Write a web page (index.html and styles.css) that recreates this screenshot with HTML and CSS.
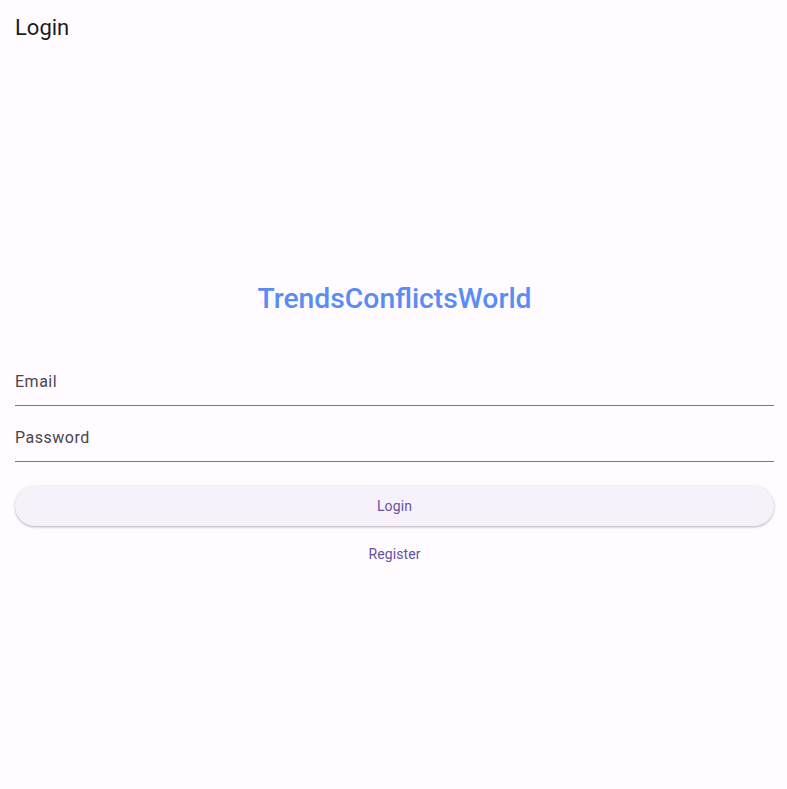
FILE: index.html
```html
<!DOCTYPE html>
<html lang="en">
<head>
<meta charset="utf-8">
<title>Login</title>
<link rel="stylesheet" href="styles.css">
</head>
<body>
<div class="app">
  <header class="appbar"><h1 class="appbar-title">Login</h1></header>
  <main class="body">
    <div class="form">
      <div class="logo">TrendsConflictsWorld</div>
      <label class="field"><span class="field-label">Email</span></label>
      <label class="field"><span class="field-label">Password</span></label>
      <button class="btn btn-elevated" type="button">Login</button>
      <button class="btn btn-text" type="button">Register</button>
    </div>
  </main>
</div>
</body>
</html>
```

FILE: styles.css
```css
* { box-sizing: border-box; }
html, body { margin: 0; padding: 0; height: 100%; }
body {
  background: #fffbfe;
  font-family: Roboto, "Noto Sans", "Liberation Sans", sans-serif;
  color: #1c1b1f;
}
.app {
  height: 100%;
  display: flex;
  flex-direction: column;
}
.appbar {
  height: 56px;
  flex: none;
  display: flex;
  align-items: center;
  padding: 0 16px 0 15px;
}
.appbar-title {
  margin: 0;
  font-size: 22px;
  font-weight: 400;
  line-height: 28px;
  color: #1c1b1f;
}
.body {
  flex: 1;
  display: flex;
  flex-direction: column;
  justify-content: center;
  padding: 0 13px 0 15px;
}
.form {
  display: flex;
  flex-direction: column;
}
.logo {
  text-align: center;
  font-size: 28.3px;
  font-weight: 500;
  line-height: 32px;
  color: #5a8cf5;
  margin: 12px 0 35px;
}
.field {
  height: 56px;
  display: flex;
  align-items: center;
  padding-top: 8px;
  border-bottom: 1px solid #79747e;
}
.field-label {
  font-size: 16px;
  letter-spacing: 0.5px;
  color: #49454f;
}
.btn {
  height: 40px;
  border: none;
  border-radius: 20px;
  font-family: inherit;
  font-size: 14px;
  font-weight: 400;
  letter-spacing: 0.1px;
  color: #6750a4;
  background: transparent;
  padding: 0;
}
.btn-elevated {
  margin-top: 24px;
  background: #f7f2fa;
  box-shadow: 0 1px 2px rgba(0,0,0,0.22), 0 1px 3px 1px rgba(0,0,0,0.06);
}
.btn-text {
  margin-top: 8px;
  margin-bottom: 1px;
}
```
